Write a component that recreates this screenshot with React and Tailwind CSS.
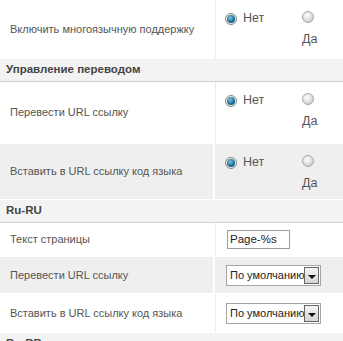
import React from 'react';

// Радиокнопка в стиле старой админки
function Radio({ checked }) {
  if (checked) {
    return (
      <span className="inline-flex h-[12px] w-[12px] shrink-0 items-center justify-center rounded-full border border-[#8a8a8a] bg-[#e8e8e8]">
        <span className="h-[8px] w-[8px] rounded-full bg-[radial-gradient(circle_at_40%_35%,#7fc3e6,#1a6b94_60%,#0d3f5c)]" />
      </span>
    );
  }
  return (
    <span className="inline-block h-[12px] w-[12px] shrink-0 rounded-full border border-[#a8a8a8] bg-[radial-gradient(circle_at_40%_35%,#ffffff,#dcdcdc_55%,#bdbdbd)]" />
  );
}

function YesNo() {
  return (
    <div className="flex items-start pt-[11px] text-[12.5px] text-[#555]">
      <div className="flex w-[77px] items-center gap-[6px]">
        <Radio checked />
        <span className="leading-[15px]">Нет</span>
      </div>
      <div className="flex flex-col items-start gap-[9px]">
        <Radio />
        <span className="leading-[15px]">Да</span>
      </div>
    </div>
  );
}

function Select() {
  return (
    <div className="flex h-[21px] w-[95px] items-center border border-[#a5a5a5] bg-white">
      <span className="flex-1 whitespace-nowrap pl-[3px] text-[11px] text-[#222]">По умолчанию</span>
      <span className="mr-[1px] flex h-[17px] w-[15px] items-end justify-center border border-[#666] bg-[linear-gradient(#f4f4f4,#d4d4d4)] pb-[4px]">
        <span className="h-0 w-0 border-x-[4px] border-t-[4px] border-x-transparent border-t-[#111]" />
      </span>
    </div>
  );
}

function Header({ children }) {
  return (
    <div className="flex h-[23px] items-center border-b border-[#cfcfcf] bg-[#f3f3f3] pl-[6px] text-[11.5px] font-bold text-[#444]">
      {children}
    </div>
  );
}

function Row({ label, gray, height, children }) {
  const bg = gray ? 'bg-[#efefef]' : 'bg-white';
  return (
    <div className={`flex gap-[2px] ${gray ? 'border-y border-white' : ''}`} style={{ height }}>
      <div className={`flex w-[213px] items-center pl-[10px] text-[11px] text-[#555] ${bg}`}>
        {label}
      </div>
      <div className={`flex-1 border-l border-[#ececec] pl-[9px] ${bg}`}>{children}</div>
    </div>
  );
}

export default function App() {
  return (
    <div className="w-[343px] overflow-hidden bg-white font-['Liberation_Sans',Arial,sans-serif]">
      <Row label="Включить многоязычную поддержку" height={59}>
        <YesNo />
      </Row>
      <Header>Управление переводом</Header>
      <Row label="Перевести URL ссылку" height={61}>
        <YesNo />
      </Row>
      <Row label="Вставить в URL ссылку код языка" gray height={57}>
        <YesNo />
      </Row>
      <Header>Ru-RU</Header>
      <Row label="Текст страницы" height={33}>
        <div className="flex h-full items-center pl-[2px]">
          <div className="flex h-[19px] w-[63px] items-center border border-[#9c9c9c] bg-white pl-[2px] text-[11.5px] text-[#222]">
            Page-%s
          </div>
        </div>
      </Row>
      <Row label="Перевести URL ссылку" gray height={38}>
        <div className="flex h-full items-center pl-[1px]">
          <Select />
        </div>
      </Row>
      <Row label="Вставить в URL ссылку код языка" height={39}>
        <div className="flex h-full items-center pl-[1px]">
          <Select />
        </div>
      </Row>
      <Header>Bo-BB</Header>
    </div>
  );
}
